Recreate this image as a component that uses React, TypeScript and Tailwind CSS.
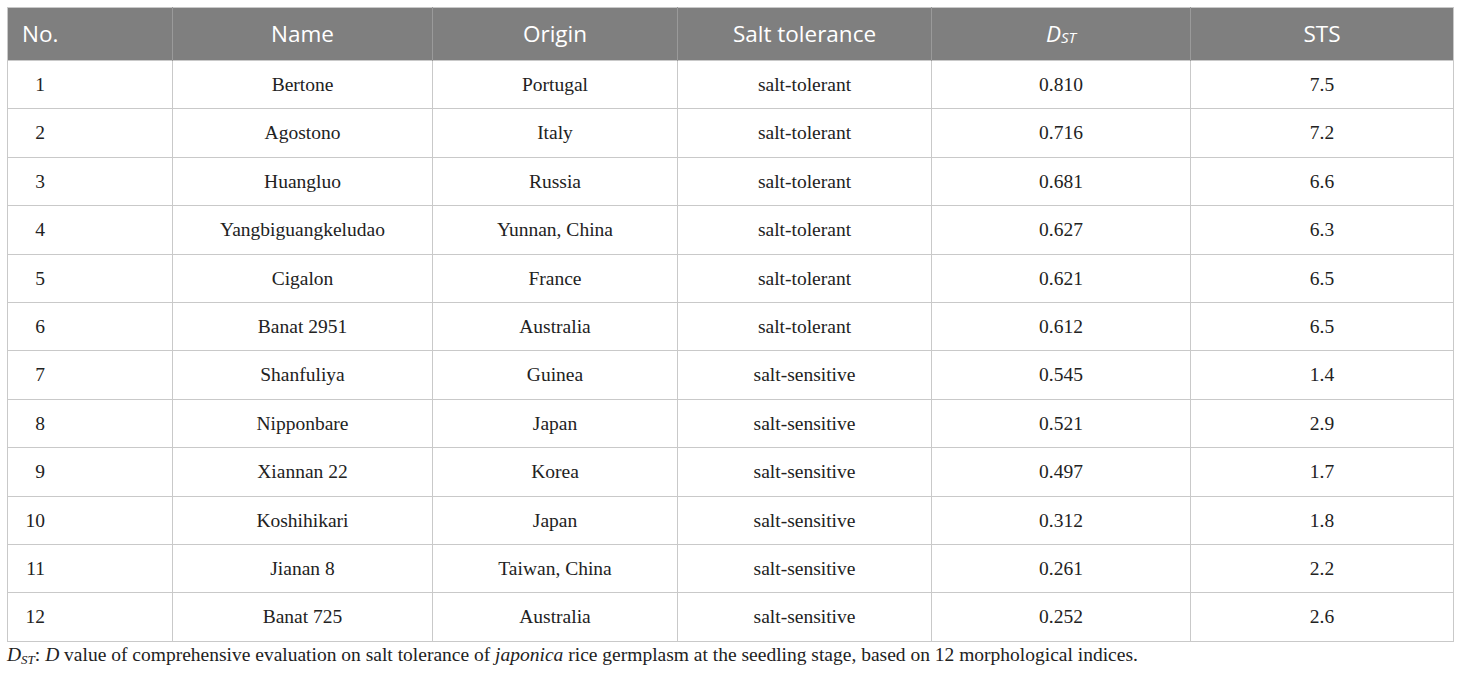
const rows: [string, string, string, string, string, string][] = [
  ["1", "Bertone", "Portugal", "salt-tolerant", "0.810", "7.5"],
  ["2", "Agostono", "Italy", "salt-tolerant", "0.716", "7.2"],
  ["3", "Huangluo", "Russia", "salt-tolerant", "0.681", "6.6"],
  ["4", "Yangbiguangkeludao", "Yunnan, China", "salt-tolerant", "0.627", "6.3"],
  ["5", "Cigalon", "France", "salt-tolerant", "0.621", "6.5"],
  ["6", "Banat 2951", "Australia", "salt-tolerant", "0.612", "6.5"],
  ["7", "Shanfuliya", "Guinea", "salt-sensitive", "0.545", "1.4"],
  ["8", "Nipponbare", "Japan", "salt-sensitive", "0.521", "2.9"],
  ["9", "Xiannan 22", "Korea", "salt-sensitive", "0.497", "1.7"],
  ["10", "Koshihikari", "Japan", "salt-sensitive", "0.312", "1.8"],
  ["11", "Jianan 8", "Taiwan, China", "salt-sensitive", "0.261", "2.2"],
  ["12", "Banat 725", "Australia", "salt-sensitive", "0.252", "2.6"],
];

const serif = "font-['Liberation_Serif','Times_New_Roman',serif]";
const sans = "font-['Open_Sans','Noto_Sans',sans-serif]";

export default function App() {
  return (
    <div className="bg-white w-[1460px] h-[677px] px-[7px] pt-[7px]">
      <table className="w-[1446px] border-collapse table-fixed border border-[#c9c9c9]">
        <colgroup>
          <col className="w-[165px]" />
          <col className="w-[260px]" />
          <col className="w-[245px]" />
          <col className="w-[254px]" />
          <col className="w-[259px]" />
          <col className="w-[263px]" />
        </colgroup>
        <thead>
          <tr className={`h-[53px] bg-[#7f7f7f] text-white text-[22.5px] ${sans}`}>
            <th className="font-normal text-left pl-[14px] border-r border-[#9a9a9a]">No.</th>
            <th className="font-normal text-center border-r border-[#9a9a9a]">Name</th>
            <th className="font-normal text-center border-r border-[#9a9a9a]">Origin</th>
            <th className="font-normal text-center border-r border-[#9a9a9a]">Salt tolerance</th>
            <th className="font-normal text-center border-r border-[#9a9a9a]">
              <span className="italic">D</span>
              <sub className="italic text-[15px] relative top-[1px]">ST</sub>
            </th>
            <th className="font-normal text-center">STS</th>
          </tr>
        </thead>
        <tbody className={`${serif} text-[19.5px] text-[#222]`}>
          {rows.map((r) => (
            <tr key={r[0]} className="h-[48.4px]">
              <td className="border border-[#c9c9c9] pl-[6px]">
                <span className="inline-block w-[31px] text-right">{r[0]}</span>
              </td>
              {r.slice(1).map((c, i) => (
                <td key={i} className="border border-[#c9c9c9] text-center">
                  {c}
                </td>
              ))}
            </tr>
          ))}
        </tbody>
      </table>
      <p className={`${serif} text-[19.5px] leading-[24px] text-[#222] mt-[1px]`}>
        <span className="italic">D</span>
        <sub className="italic text-[13px]">ST</sub>: <span className="italic">D</span> value of comprehensive
        evaluation on salt tolerance of <span className="italic">japonica</span> rice germplasm at the seedling stage,
        based on 12 morphological indices.
      </p>
    </div>
  );
}
